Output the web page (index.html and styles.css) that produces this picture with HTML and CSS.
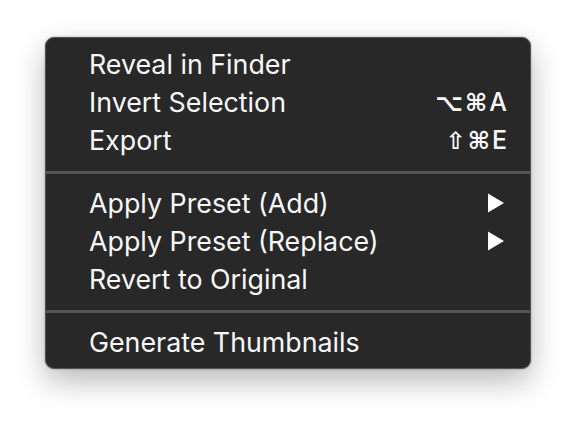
FILE: index.html
```html
<!DOCTYPE html>
<html>
<head>
<meta charset="utf-8">
<link rel="stylesheet" href="styles.css">
</head>
<body>
<div class="menu">
  <div class="item"><span class="label">Reveal in Finder</span></div>
  <div class="item"><span class="label">Invert Selection</span><span class="key"><span class="sym">⌥⌘</span>A</span></div>
  <div class="item"><span class="label">Export</span><span class="key"><span class="sym">⇧⌘</span>E</span></div>
  <div class="sep"></div>
  <div class="item"><span class="label">Apply Preset (Add)</span><svg class="arrow" width="18" height="20" viewBox="0 0 18 20"><path d="M1 0.5 L17 10 L1 19.5 Z" fill="#fff"/></svg></div>
  <div class="item"><span class="label">Apply Preset (Replace)</span><svg class="arrow" width="18" height="20" viewBox="0 0 18 20"><path d="M1 0.5 L17 10 L1 19.5 Z" fill="#fff"/></svg></div>
  <div class="item"><span class="label">Revert to Original</span></div>
  <div class="sep"></div>
  <div class="item"><span class="label">Generate Thumbnails</span></div>
</div>
</body>
</html>
```
FILE: styles.css
```css
html, body {
  margin: 0;
  padding: 0;
  background: #ffffff;
}
body {
  min-height: 100vh;
  box-sizing: border-box;
  padding: 37px 0 0 45px;
  font-family: "Inter", "Liberation Sans", sans-serif;
}
.menu {
  width: 484px;
  background: #282828;
  border: 1px solid #565656;
  border-radius: 9px;
  padding: 7px 0;
  box-shadow: 0 12px 30px rgba(0, 0, 0, 0.28), 0 0 2px rgba(0, 0, 0, 0.4);
}
.item {
  height: 38px;
  display: flex;
  align-items: center;
  justify-content: space-between;
  padding: 0 23px 0 43px;
  color: #f7f7f7;
  font-size: 26.8px;
}
.key {
  font-size: 25px;
  font-weight: 500;
}
.sym {
  font-family: "DejaVu Sans", sans-serif;
  font-size: 24px;
  font-weight: 700;
  letter-spacing: 2px;
}
.arrow {
  margin-right: 2px;
}
.sep {
  height: 3px;
  background: #555555;
  margin: 12px 0 10px;
}
```
